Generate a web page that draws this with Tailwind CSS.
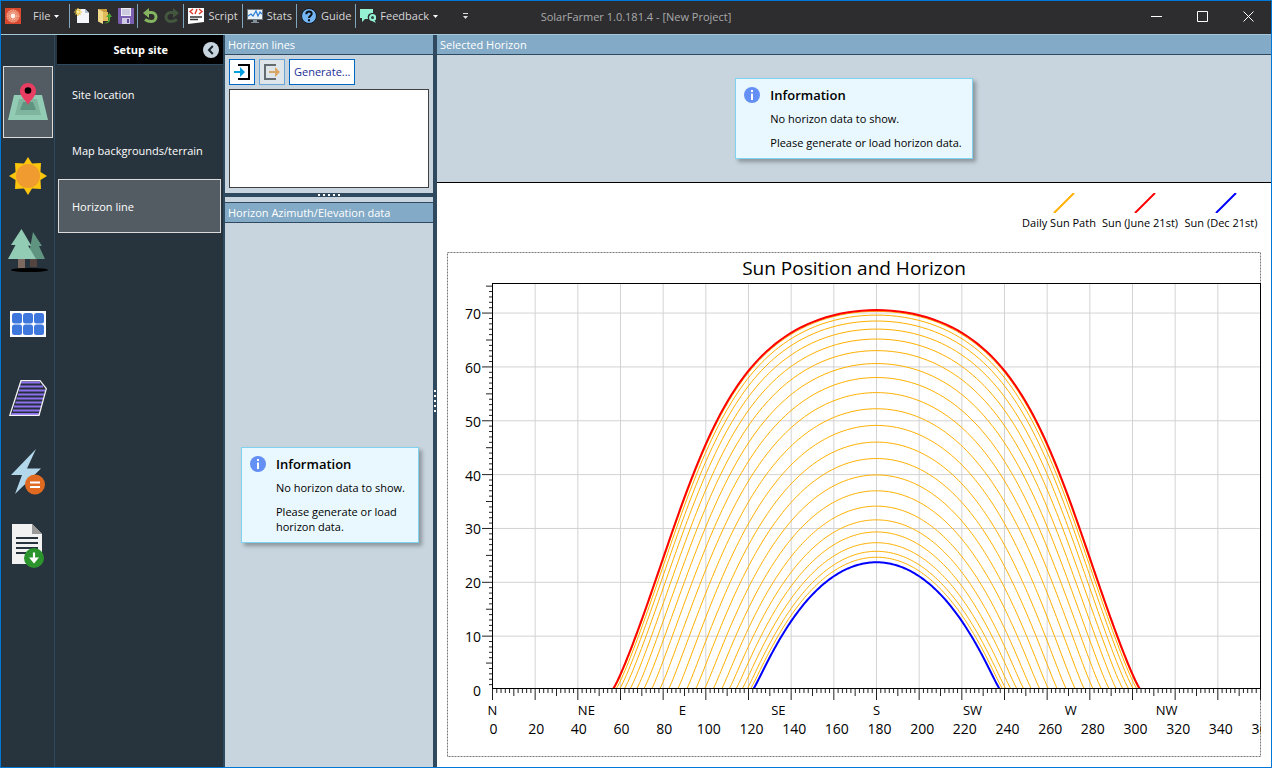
<!DOCTYPE html>
<html lang="en">
<head>
<meta charset="utf-8">
<title>SolarFarmer 1.0.181.4 - [New Project]</title>
<script src="https://cdn.jsdelivr.net/npm/@tailwindcss/browser@4"></script>
</head>
<body class="flex h-screen flex-col overflow-hidden border border-[#0078d7] bg-[#28343d] font-['Open_Sans','Noto_Sans',sans-serif] text-[11px] leading-4 text-black">

<header class="relative flex h-[34px] shrink-0 items-center border-b border-[#a3c8d8] bg-[#2d2d30] pb-[3px] text-[#d6d6d6]">
  <svg class="ml-1 size-4 shrink-0" viewBox="0 0 16 16"><rect width="16" height="16" fill="#d8492f"/><circle cx="8" cy="8" r="6.5" fill="#ea8468"/><circle cx="8" cy="8" r="6" fill="none" stroke="#f7b9a2" stroke-dasharray="1 1.5"/><circle cx="8" cy="8" r="3.8" fill="none" stroke="#fbd5c5" stroke-dasharray="1 1"/><circle cx="8" cy="8" r="2.4" fill="#fff0e8"/></svg>
  <button class="ml-3 flex items-center gap-1">File <svg class="size-[5px]" viewBox="0 0 5 5"><path d="M0 1h5L2.500 4z" fill="#fff"/></svg></button>
  <span class="ml-2.5 h-6 w-px bg-[#7ea6bd]"></span>
  <button class="ml-1 size-4" aria-label="New"><svg viewBox="0 0 16 16"><path d="M3 1h8l4 4v10H3z" fill="#f4f6fa"/><path d="M11 1v4h4z" fill="#aebfd4"/><path d="M4 0v8M0 4h8M1.500 1.500l5 5M6.500 1.500l-5 5" stroke="#e8c33c" stroke-width="1.200"/><circle cx="4" cy="4" r="1.500" fill="#fff3a8"/></svg></button>
  <button class="ml-1.5 size-4" aria-label="Open"><svg viewBox="0 0 16 16"><path d="M2 1h9v12H2z" fill="#c69b3c"/><path d="M2 1l5 2.500V16l-5-2.500z" fill="#f3d98a"/><path d="M7 4h5v9H7z" fill="#e2bc5c"/><path d="M8 15c4 0 5-3 4-6h-2l3.500-4L16 9h-2c1 5-2 7-6 6z" fill="#4ea72e"/></svg></button>
  <button class="ml-1.5 size-4" aria-label="Save"><svg viewBox="0 0 16 16"><path d="M0 0h16v16H1l-1-1z" fill="#7b5fb0"/><path d="M3 0h10v8H3z" fill="#eeeef6"/><path d="M4 2h8M4 4h8M4 6h8" stroke="#aaa6c8"/><path d="M4 10h8v6H4z" fill="#cfcbe2"/><path d="M9 11h2v4H9z" fill="#65499a"/></svg></button>
  <span class="ml-[3px] h-6 w-px bg-[#7ea6bd]"></span>
  <button class="ml-1 size-4" aria-label="Undo"><svg viewBox="0 0 16 16"><path d="M6 4.500h3.500a4.500 4.500 0 010 9C7 13.500 5 13 3 11.500" fill="none" stroke="#86b560" stroke-width="3"/><path d="M1 5l6-5v10z" fill="#86b560"/></svg></button>
  <button class="ml-1.5 size-4" aria-label="Redo" disabled><svg viewBox="0 0 16 16"><path d="M10 4.500H6.500a4.500 4.500 0 000 9C9 13.500 11 13 13 11.500" fill="none" stroke="#43563e" stroke-width="3"/><path d="M15 5L9 0v10z" fill="#43563e"/></svg></button>
  <span class="ml-[3px] h-6 w-px bg-[#7ea6bd]"></span>
  <button class="ml-1 flex items-center gap-1"><svg class="size-4" viewBox="0 0 16 16"><path d="M0 0h16v14l-8 1-8 1z" fill="#fff"/><path d="M5 1L2 3.500 5 6M11 1l3 2.500L11 6M9 1L7 6" fill="none" stroke="#e03a2e" stroke-width="1.400"/><path d="M2 9h12M2 11.500h8" stroke="#333" stroke-width="1.300"/></svg>Script</button>
  <span class="ml-1 h-6 w-px bg-[#7ea6bd]"></span>
  <button class="ml-1 flex items-center gap-1"><svg class="size-4" viewBox="0 0 16 16"><path d="M0 1h16v11H0z" fill="#6b7882"/><path d="M1 2h14v9H1z" fill="#eaf2f8"/><path d="M1 8l3-2 2 2 3-5 2 5 2-4 2 2" fill="none" stroke="#2f7fd6" stroke-width="1.300"/><path d="M6 12h4v2h2v1H4v-1h2z" fill="#81909b"/></svg>Stats</button>
  <span class="ml-1 h-6 w-px bg-[#7ea6bd]"></span>
  <button class="ml-1 flex items-center gap-1"><svg class="size-4" viewBox="0 0 16 16"><circle cx="8" cy="8" r="7.500" fill="#74b4f5" stroke="#101820"/><path d="M5.300 6.200C5.300 2.500 11 2.700 10.700 6 10.500 7.800 8 8 8 10" fill="none" stroke="#0b0f14" stroke-width="2"/><path d="M7 11.200h2v2H7z" fill="#0b0f14"/></svg>Guide</button>
  <span class="ml-1 h-6 w-px bg-[#7ea6bd]"></span>
  <button class="ml-1 flex items-center gap-1"><svg class="size-4" viewBox="0 0 16 16"><path d="M0 1h13v4c-4 0-6 2-5 6H5l-3 3v-4H0z" fill="#95f3d3"/><path d="M12.500 6c5 0 4.500 6 2 6.500L16 15l-4-2c-4 0-4-7 .5-7z" fill="#95f3d3"/><circle cx="12.500" cy="9.500" r="1.500" fill="#2d4a44"/></svg>Feedback <svg class="size-[5px]" viewBox="0 0 5 5"><path d="M0 1h5L2.500 4z" fill="#fff"/></svg></button>
  <button class="ml-6 size-[7px]" aria-label="Customize toolbar"><svg viewBox="0 0 7 7"><path d="M1 .5h5" stroke="#ddd"/><path d="M1 3h5L3.500 6z" fill="#ddd"/></svg></button>
  <h1 class="absolute inset-x-0 top-2 mx-auto w-fit text-[#a9a9a9]">SolarFarmer 1.0.181.4 - [New Project]</h1>
  <div class="ml-auto flex">
    <button class="grid h-8 w-[46px] place-items-center" aria-label="Minimize"><svg class="size-[11px]" viewBox="0 0 11 11"><path d="M0 5.500h11" stroke="#fff"/></svg></button>
    <button class="grid h-8 w-[46px] place-items-center" aria-label="Maximize"><svg class="size-[11px]" viewBox="0 0 11 11"><path d="M.5.5h10v10H.5z" fill="none" stroke="#fff"/></svg></button>
    <button class="grid h-8 w-[46px] place-items-center" aria-label="Close"><svg class="size-[11px]" viewBox="0 0 11 11"><path d="M.5.5l10 10M10.500.5l-10 10" stroke="#fff"/></svg></button>
  </div>
</header>

<div class="flex min-h-0 flex-1">
  <nav class="flex w-[54px] shrink-0 flex-col items-center gap-0.5 border-r border-[#2f495e] pt-[31px]" aria-label="Sections">
    <button class="grid h-[72px] w-[50px] place-items-center border border-[#dcdcdc] bg-[#535c63]" aria-label="Site"><svg class="size-10" viewBox="0 0 40 40"><path d="M6 13h28l6 25H0z" fill="#93ccb4"/><path d="M11 17h18l4 16H7z" fill="#7fb59e"/><path d="M15 20h10l3 8H12z" fill="#5f9480"/><path d="M20 23c-2-5-8-8-8-14a8 8 0 0116 0c0 6-6 9-8 14z" fill="#e83e62"/><circle cx="20" cy="8.500" r="3.300"/></svg></button>
    <button class="grid h-[72px] w-[50px] place-items-center" aria-label="Climate"><svg class="size-[38px]" viewBox="0 0 38 38"><path d="M19 0l4 6.500 9-.5-.5 9L38 19l-6.500 4 .5 9-9-.5L19 38l-4-6.500-9 .5.500-9L0 19l6.500-4L6 6l9 .5z" fill="#fbc60d"/><circle cx="19" cy="19" r="12" fill="#ef9b30"/></svg></button>
    <button class="grid h-[72px] w-[50px] place-items-center" aria-label="Shading"><svg class="h-11 w-10" viewBox="0 0 40 44"><ellipse cx="21.500" cy="42" rx="18.500" ry="2"/><path d="M22 30h7v9h-7z" fill="#54443f"/><path d="M25 4l9 14-3 0 6 13H20z" fill="#5f9480"/><path d="M10 30h7v10h-7z" fill="#7e6961"/><path d="M13.500 1l10 17-3.500-.5L28 31H0l7.500-14H3z" fill="#93ccb4"/></svg></button>
    <button class="grid h-[72px] w-[50px] place-items-center" aria-label="Modules"><svg class="h-[26px] w-9" viewBox="0 0 36 26"><path d="M0 0h36v26H0z" fill="#fff"/><g fill="#3f78dc"><rect x="2" y="2" width="10" height="10.500" rx="2.500"/><rect x="13" y="2" width="10" height="10.500" rx="2.500"/><rect x="24" y="2" width="10" height="10.500" rx="2.500"/><rect x="2" y="13.500" width="10" height="10.500" rx="2.500"/><rect x="13" y="13.500" width="10" height="10.500" rx="2.500"/><rect x="24" y="13.500" width="10" height="10.500" rx="2.500"/></g></svg></button>
    <button class="grid h-[72px] w-[50px] place-items-center" aria-label="Layout"><svg class="h-9 w-[38px]" viewBox="0 0 38 36"><path d="M12 .7h19l6.300 8L30 35.300H.8z" fill="#26303c"/><path d="M12 2.500h19M11 6.500h23M10 10.500h26M9 14.500h26M7.500 18.500h26.500M6.500 22.500h26.500M5 26.500h27M4 30.500h27M2.500 34h28" stroke="#8d70ee" stroke-width="2"/><path d="M12 .7h19l6.300 8L30 35.300H.8z" fill="none" stroke="#f4f4f4" stroke-width="1.300"/></svg></button>
    <button class="grid h-[72px] w-[50px] place-items-center" aria-label="Electrical"><svg class="size-[46px]" viewBox="0 0 46 46"><path d="M31 0L6 26h11L10 45l26-25.500H22z" fill="#b3d7eb"/><circle cx="30" cy="35.500" r="10" fill="#e06b20"/><path d="M25 33.500h10M25 38h10" stroke="#fff" stroke-width="2.200"/></svg></button>
    <button class="grid h-[72px] w-[50px] place-items-center" aria-label="Report"><svg class="h-11 w-8" viewBox="0 0 32 44"><path d="M0 0h20l10 10v30H0z" fill="#f2f2f2"/><path d="M20 0v10h10z" fill="#9a9a9a"/><path d="M4 14h22M4 19h22M4 24h22M4 29h10" stroke="#28343d" stroke-width="2"/><circle cx="22" cy="34" r="10" fill="#2b942d"/><path d="M22 28.500v7" stroke="#fff" stroke-width="2.200"/><path d="M17 33.500h10L22 39.500z" fill="#fff"/></svg></button>
  </nav>

  <aside class="ml-0.5 w-[166px] shrink-0 text-white">
    <div class="flex h-[29px] items-center justify-end gap-[35px] bg-black pr-1">
      <h2 class="font-bold">Setup site</h2>
      <button class="size-4" aria-label="Collapse"><svg viewBox="0 0 16 16"><circle cx="8" cy="8" r="8" fill="#c8d5de"/><path d="M9.800 4L6 8l3.800 4" fill="none" stroke="#1b242c" stroke-width="2"/></svg></button>
    </div>
    <ul class="flex flex-col gap-0.5 border-t border-[#2f495e] pt-0.5 pr-0.5 pl-px">
      <li><a href="#" class="flex h-[54px] items-center px-3.5 pt-0.5">Site location</a></li>
      <li><a href="#" class="flex h-[54px] items-center px-3.5 pt-0.5">Map backgrounds/terrain</a></li>
      <li><a href="#" class="flex h-[54px] items-center border border-[#dcdcdc] bg-[#535c63] px-[13px] pt-0.5" aria-current="page">Horizon line</a></li>
    </ul>
  </aside>

  <main class="flex min-w-0 flex-1 border-l-2 border-[#2f495e]">
    <div class="flex w-[208px] shrink-0 flex-col bg-[#c8d5de]">
      <section>
        <h2 class="flex h-5 items-center border-b border-[#2f495e] bg-[#83aac6] pl-[3px] text-white">Horizon lines</h2>
        <div class="flex gap-1 p-1">
          <button class="grid size-[26px] place-items-center border border-[#0067c0] bg-white" aria-label="Import"><svg class="size-4" viewBox="0 0 16 16"><path d="M4 1h11v14H4" fill="none" stroke="#000" stroke-width="2"/><path d="M0 7h6V3l5 5-5 5V9H0z" fill="#009fdf"/></svg></button>
          <button class="grid size-[26px] place-items-center border border-[#6ba3d6] bg-[#dfe6ea]" aria-label="Export" disabled><svg class="size-4" viewBox="0 0 16 16"><path d="M12 1H1v14h11" fill="none" stroke="#636b6e" stroke-width="2"/><path d="M5 7h6V3l5 5-5 5V9H5z" fill="#d9a765"/></svg></button>
          <button class="h-[26px] border border-[#0067c0] bg-white px-1 text-[#1a2f96]">Generate...</button>
        </div>
        <ul class="mx-1 mb-[5px] h-[99px] border border-[#404040] bg-white" aria-label="Horizon lines list"></ul>
      </section>
      <div class="flex h-1 items-center justify-center gap-[3px] bg-[#2f495e]"><i class="size-0.5 bg-white"></i><i class="size-0.5 bg-white"></i><i class="size-0.5 bg-white"></i><i class="size-0.5 bg-white"></i><i class="size-0.5 bg-white"></i></div>
      <section class="mt-[5px] flex flex-1 flex-col">
        <h2 class="flex h-[21px] items-center border-y border-[#2f495e] bg-[#83aac6] pl-[3px] text-white">Horizon Azimuth/Elevation data</h2>
        <div class="grid flex-1 place-items-center pl-0.5">
          <div class="flex w-[178px] gap-2.5 border border-[#7fd3ee] bg-[#e9f8fe] px-2 pt-2 pb-2 shadow-[3px_3px_4px_rgba(0,0,0,0.3)]">
            <svg class="size-4 shrink-0" viewBox="0 0 16 16"><circle cx="8" cy="8" r="8" fill="#648ff5"/><path d="M7 3h2v2H7zM7 6.500h2V13H7z" fill="#fff"/></svg>
            <div class="leading-[15px]"><h3 class="text-[13px] leading-4 font-semibold">Information</h3><p class="mt-2">No horizon data to show.</p><p class="mt-[9px]">Please generate or load horizon data.</p></div>
          </div>
        </div>
      </section>
    </div>

    <div class="flex w-1 shrink-0 flex-col items-center justify-center gap-[3px] bg-[#2f495e]"><i class="size-0.5 bg-white"></i><i class="size-0.5 bg-white"></i><i class="size-0.5 bg-white"></i><i class="size-0.5 bg-white"></i><i class="size-0.5 bg-white"></i></div>

    <section class="flex min-w-0 flex-1 flex-col bg-white">
      <h2 class="flex h-5 shrink-0 items-center border-b border-[#2f495e] bg-[#83aac6] pl-[3px] text-white">Selected Horizon</h2>
      <div class="grid h-32 shrink-0 place-items-center border-b border-black bg-[#c8d5de]">
        <div class="flex gap-2.5 border border-[#7fd3ee] bg-[#e9f8fe] py-2 pr-2.5 pl-2 shadow-[3px_3px_4px_rgba(0,0,0,0.3)]">
          <svg class="size-4 shrink-0" viewBox="0 0 16 16"><circle cx="8" cy="8" r="8" fill="#648ff5"/><path d="M7 3h2v2H7zM7 6.500h2V13H7z" fill="#fff"/></svg>
          <div class="leading-[15px]"><h3 class="text-[13px] leading-4 font-semibold">Information</h3><p class="mt-2">No horizon data to show.</p><p class="mt-[9px]">Please generate or load horizon data.</p></div>
        </div>
      </div>
      <ul class="flex justify-end pt-2.5 pr-2.5">
        <li class="flex min-w-20 flex-col items-center gap-0.5"><svg class="ml-2.5 h-5 w-[22px]" viewBox="0 0 22 20"><path d="M1 20L21 0" stroke="#ffb000" stroke-width="2"/></svg>Daily Sun Path</li>
        <li class="flex min-w-[82px] flex-col items-center gap-0.5"><svg class="ml-2.5 h-5 w-[22px]" viewBox="0 0 22 20"><path d="M1 20L21 0" stroke="#f00" stroke-width="2"/></svg>Sun (June 21st)</li>
        <li class="flex min-w-20 flex-col items-center gap-0.5"><svg class="ml-2.5 h-5 w-[22px]" viewBox="0 0 22 20"><path d="M1 20L21 0" stroke="#00f" stroke-width="2"/></svg>Sun (Dec 21st)</li>
      </ul>
      <div id="plot" class="mx-2.5 mt-[21px] mb-2.5 min-h-0 flex-1 overflow-hidden">
        <svg id="chart" class="block size-full" role="img" aria-label="Sun Position and Horizon"></svg>
      </div>
    </section>
  </main>
</div>

<script>
const LATITUDE = 42.88;
// Solar declinations of the daily paths, in degrees
const DAILY = [23.2, 22.5, 21.4, 19.9, 18.05, 15.9, 13.5, 10.9, 8.1, 5.1, 2, -1.1, -4.15, -7.2, -10.15, -13, -15.55, -17.8, -19.8, -21.4, -22.5];
const chart = document.getElementById('chart');
const rad = Math.PI / 180;

// Apparent elevation after atmospheric refraction, in degrees
const refract = e => e + 0.0167 / Math.tan((e + 7.31 / (e + 4.4)) * rad);

function draw() {
  const box = document.getElementById('plot');
  const W = box.clientWidth, H = box.clientHeight;
  if (W < 100 || H < 150) return;
  const left = 45, right = W - 1, top = 31, base = H - 68;
  const X = az => left + .5 + az * (right - left) / 360;
  const Y = el => base + 1 - el * (base - top) / 75.4;
  let s = `<rect x=".5" y=".5" width="${W - 1}" height="${H - 1}" fill="none" stroke="#777" stroke-dasharray="2 1"/>`;
  s += `<text x="${W / 2}" y="23" class="text-[19px]" text-anchor="middle">Sun Position and Horizon</text>`;

  let grid = '';
  for (let a = 20; a < 360; a += 20) grid += `M${X(a)} ${top}V${base}`;
  for (let e = 10; e <= 70; e += 10) grid += `M${left} ${Y(e)}H${right}`;
  s += `<path d="${grid}" stroke="#d3d3d3"/>`;

  let ticks = '';
  for (let a = 0; a <= 360; a += 2) ticks += `M${X(a)} ${base}v${a % 20 === 0 ? 11 : a % 10 === 0 ? 7 : 4}`;
  for (let e = 1; e <= 75; e++) ticks += `M${left} ${Y(e)}h${e % 10 === 0 ? -10 : e % 5 === 0 ? -6 : -3}`;
  s += `<path d="${ticks}" stroke="#222"/>`;

  const path = dec => {
    const sl = Math.sin(LATITUDE * rad), cl = Math.cos(LATITUDE * rad);
    const sd = Math.sin(dec * rad), cd = Math.cos(dec * rad);
    const rise = Math.acos((Math.sin(-0.6 * rad) - sl * sd) / (cl * cd));
    const pts = [];
    for (let i = -90; i <= 90; i++) {
      const h = rise * i / 90;
      const el = Math.asin(sl * sd + cl * cd * Math.cos(h));
      const az = Math.atan2(Math.sin(h) * cd, Math.cos(h) * cd * sl - sd * cl);
      pts.push(X(180 + az / rad).toFixed(2) + ' ' + Y(refract(el / rad)).toFixed(2));
    }
    return 'M' + pts.join('L');
  };
  s += `<clipPath id="area"><rect x="${left}" y="${top}" width="${right - left}" height="${base - top}"/></clipPath><g clip-path="url(#area)" fill="none">`;
  for (const d of DAILY) s += `<path d="${path(d)}" stroke="#ffb000"/>`;
  s += `<path d="${path(23.44)}" stroke="#f00" stroke-width="2"/>`;
  s += `<path d="${path(-23.44)}" stroke="#00f" stroke-width="2"/></g>`;
  s += `<rect x="${left + .5}" y="${top + .5}" width="${right - left}" height="${base - top - 1}" fill="none" stroke="#000"/>`;

  for (let e = 0; e <= 70; e += 10) s += `<text x="34" y="${Y(e) + 6}" class="text-sm" text-anchor="end">${e}</text>`;
  for (let a = 0; a <= 360; a += 20) s += `<text x="${X(a) + (a < 100 ? 1 : 3)}" y="${base + 45}" class="text-sm" text-anchor="middle">${a}</text>`;
  [['N', 0], ['NE', 44], ['E', 89], ['SE', 134], ['S', 180], ['SW', 225], ['W', 271], ['NW', 316]].forEach(([t, a]) => {
    s += `<text x="${X(a)}" y="${base + 26}" class="text-[13px]" text-anchor="middle">${t}</text>`;
  });
  chart.innerHTML = s;
}
new ResizeObserver(draw).observe(document.getElementById('plot'));
</script>
</body>
</html>
